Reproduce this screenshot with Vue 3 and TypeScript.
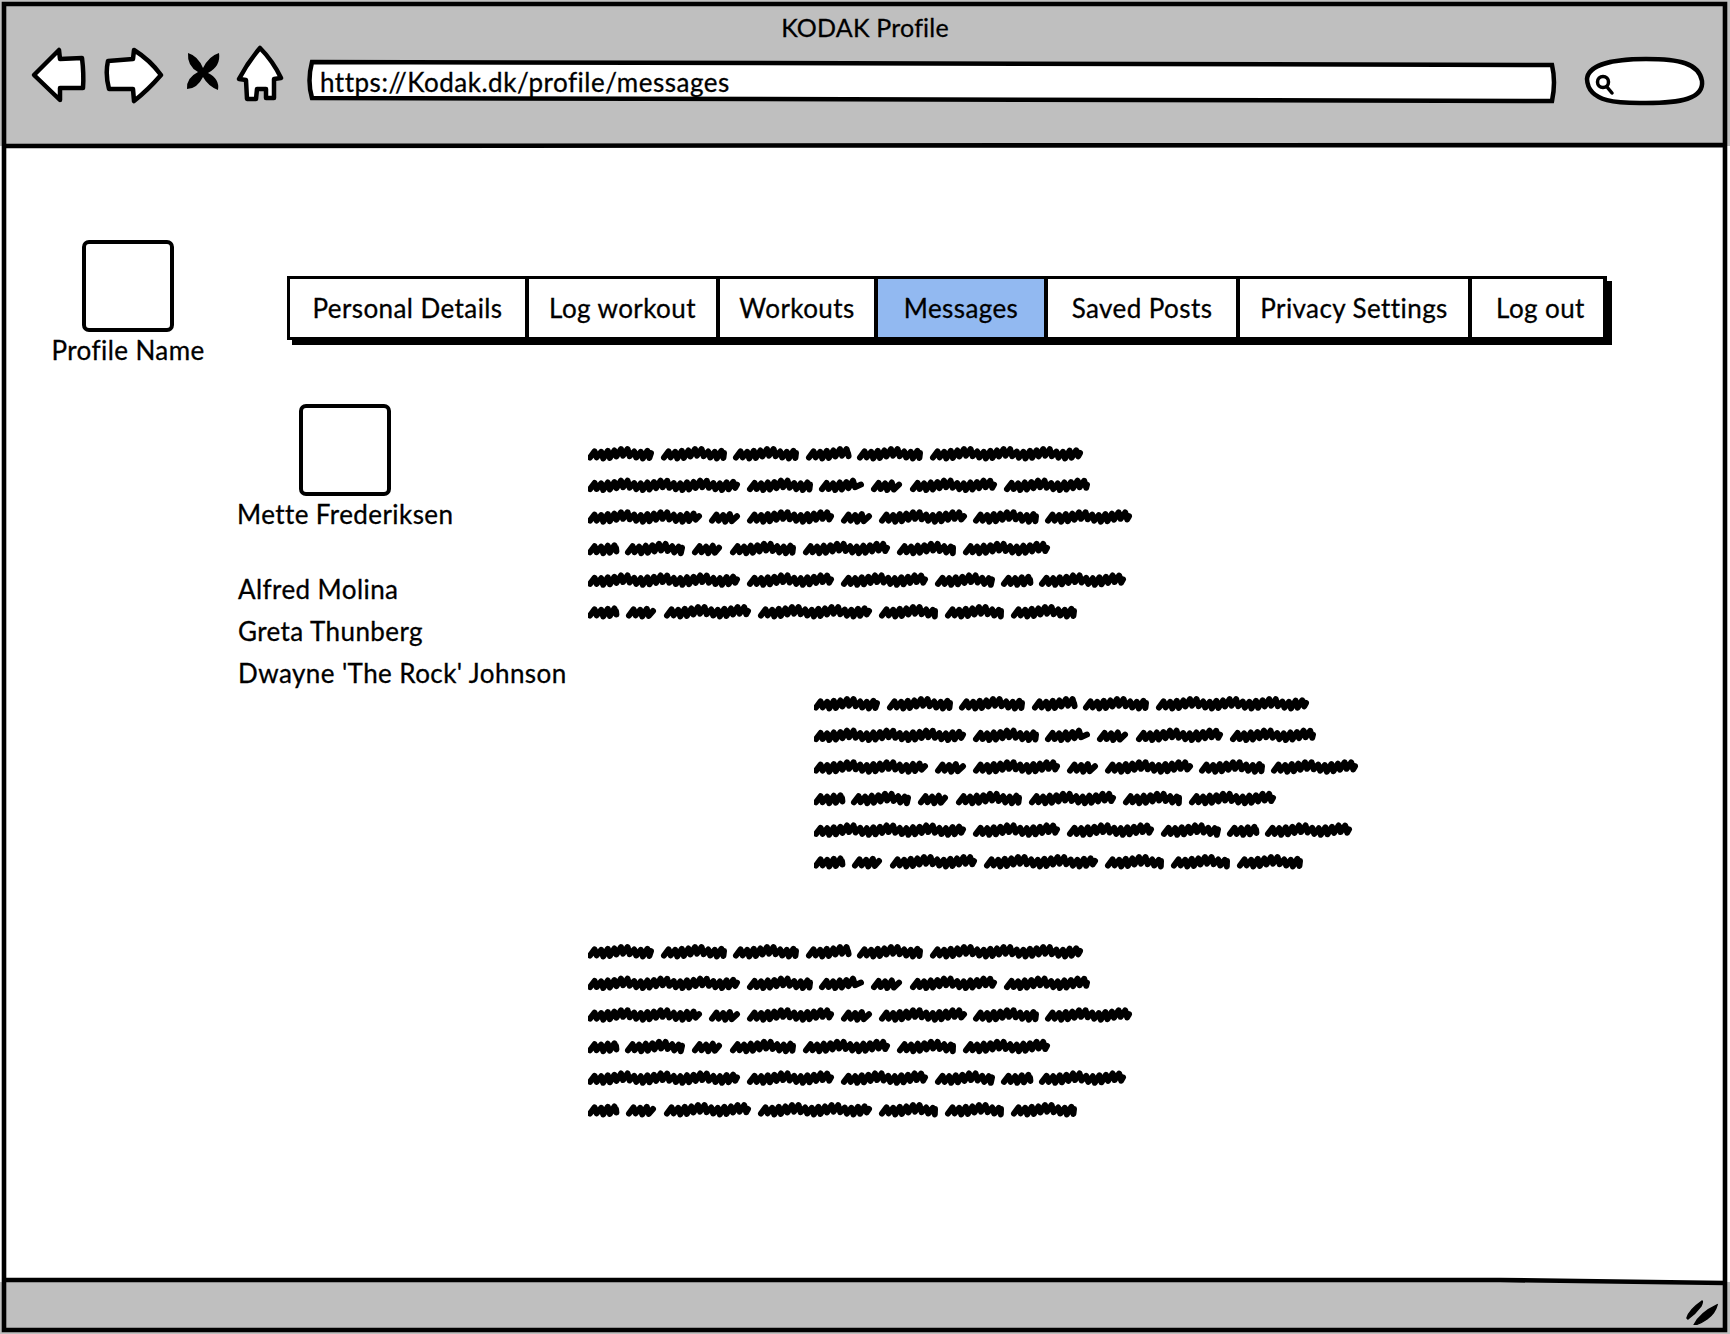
<script setup lang="ts">
const tabs = [
  { label: "Personal Details", active: false },
  { label: "Log workout", active: false },
  { label: "Workouts", active: false },
  { label: "Messages", active: true },
  { label: "Saved Posts", active: false },
  { label: "Privacy Settings", active: false },
  { label: "Log out", active: false },
];

const contacts = ["Alfred Molina", "Greta Thunberg", "Dwayne 'The Rock' Johnson"];

// word extents of the scribbled lines, measured from the left of the block
const LINES = [
  [[0, 65], [74, 138], [146, 210], [219, 262], [270, 334], [343, 494]],
  [[0, 151], [160, 224], [232, 275], [284, 313], [323, 408], [417, 501]],
  [[0, 113], [122, 151], [160, 245], [254, 283], [292, 378], [386, 450], [458, 543]],
  [[0, 30], [38, 96], [105, 133], [143, 207], [216, 301], [310, 367], [376, 461]],
  [[0, 151], [160, 245], [254, 339], [348, 406], [414, 444], [452, 537]],
  [[0, 30], [39, 67], [77, 162], [171, 283], [292, 349], [358, 415], [424, 488]],
];
const LINE_PITCH = 31.6;

// sawtooth squiggle, slanted up to the right, with a slow wobble along the word
function scribble(x0: number, x1: number, y: number): string {
  let x = x0 + 2;
  let d = `M${x} ${y + 3.5}`;
  let i = 0;
  while (x < x1 - 8) {
    const drift = 1.4 * Math.sin((x - x0) * 0.16);
    const up = 3 + ((i * 7) % 3) * 0.5;
    d += ` L${(x + 4.6).toFixed(1)} ${(y - up + drift).toFixed(1)}`;
    d += ` L${(x + 6.6).toFixed(1)} ${(y + 3 + drift).toFixed(1)}`;
    x += 6.6;
    i++;
  }
  return d + ` L${x1 - 2} ${y - 1}`;
}

const scribblePath = LINES.map((line, row) =>
  line.map(([a, b]) => scribble(a, b, 9 + row * LINE_PITCH)).join(" ")
).join(" ");

const blocks = [{ indent: false }, { indent: true }, { indent: false }];
</script>

<template>
  <div class="window">
    <header class="topbar">
      <div class="title">KODAK Profile</div>
      <div class="toolbar">
        <svg class="nav-icons" width="270" height="60" viewBox="0 0 270 60">
          <g fill="#fff" stroke="#000" stroke-width="4.5" stroke-linejoin="round">
            <path d="M4 31 L29 6 L30 15 L52 14 Q54 30 53 44 L30 44 L30 56 Z" />
            <path d="M78 17 L103 15 L104 6 Q120 16 131 31 Q118 46 104 57 L103 45 L79 45 Q75 30 78 17 Z" />
            <path d="M230 4 Q243 17 251 34 L244 35 L244 54 L236 54 L236 45 L227 45 L226 55 L217 55 L216 36 L209 35 Q218 18 230 4 Z" />
          </g>
          <path
            d="M158 9 Q168 12 173 24 Q179 12 189 9 Q191 22 178 29 Q190 35 188 46 Q178 42 173 33 Q167 45 157 45 Q156 34 168 28 Q157 22 158 9 Z"
          />
        </svg>
        <div class="url">
          <svg class="url-frame" width="1253" height="46" viewBox="0 0 1253 46">
            <path
              d="M6 3 L1246 6 Q1250 23 1246 42 L6 39 Q1 22 6 3 Z"
              fill="#fff"
              stroke="#000"
              stroke-width="4.5"
            />
          </svg>
          <span class="url-text">https://Kodak.dk/profile/messages</span>
        </div>
        <svg class="search" width="122" height="52" viewBox="0 0 122 52">
          <path
            d="M3 24 C4 10 28 4 62 4 C95 4 115 8 118 26 C120 44 96 48 62 48 C42 48 4 50 3 24 Z"
            fill="#fff"
            stroke="#000"
            stroke-width="4.5"
          />
          <circle cx="19" cy="27" r="5.5" fill="none" stroke="#000" stroke-width="3.5" />
          <path d="M23 32 L28 38" stroke="#000" stroke-width="3.5" stroke-linecap="round" />
        </svg>
      </div>
    </header>

    <main class="page">
      <div class="top-row">
        <div class="profile">
          <div class="avatar"></div>
          <div class="name">Profile Name</div>
        </div>
        <nav class="tabs">
          <div v-for="tab in tabs" :key="tab.label" class="tab" :class="{ active: tab.active }">
            {{ tab.label }}
          </div>
        </nav>
      </div>

      <div class="content">
        <aside class="people">
          <div class="person">
            <div class="avatar"></div>
            <div class="name">Mette Frederiksen</div>
          </div>
          <ul class="contacts">
            <li v-for="contact in contacts" :key="contact">{{ contact }}</li>
          </ul>
        </aside>
        <section class="thread">
          <svg
            v-for="(block, index) in blocks"
            :key="index"
            class="message"
            :class="{ indent: block.indent }"
            width="560"
            height="180"
            viewBox="0 0 560 180"
          >
            <path
              :d="scribblePath"
              fill="none"
              stroke="#000"
              stroke-width="6"
              stroke-linejoin="round"
              stroke-linecap="round"
            />
          </svg>
        </section>
      </div>
    </main>

    <footer class="statusbar">
      <svg class="grip" width="34" height="26" viewBox="0 0 34 26">
        <path d="M2 19 Q4 11 17 2 Q18 2 16 7 Q10 15 3 20 Z" stroke="#000" stroke-width="1.5" />
        <path d="M9 26 Q15 14 32 6 Q30 14 22 20 Q15 25 9 26 Z" stroke="#000" stroke-width="1.5" />
      </svg>
    </footer>

    <svg class="frame" width="1730" height="1334" viewBox="0 0 1730 1334">
      <path
        d="M4 4 L1725 4 L1725 1330 L4 1330 Z M4 146 L1725 145 M4 1280 L1500 1280 L1725 1283"
        fill="none"
        stroke="#000"
        stroke-width="4.6"
      />
    </svg>
  </div>
</template>

<style scoped>
.window {
  position: relative;
  display: flex;
  flex-direction: column;
  width: 1730px;
  height: 1334px;
  overflow: hidden;
  background: #fff;
  color: #000;
  font-family: Lato, "Open Sans", sans-serif;
  font-size: 26px;
  letter-spacing: 0.42px;
  -webkit-text-stroke: 0.3px #000;
}
.frame {
  position: absolute;
  top: 0;
  left: 0;
  pointer-events: none;
}

/* browser chrome */
.topbar {
  height: 146px;
  background: #bfbfbf;
  flex: none;
}
.title {
  padding-top: 12px;
  line-height: 30px;
  text-align: center;
  font-size: 25px;
  letter-spacing: 0.2px;
}
.toolbar {
  display: flex;
  align-items: flex-start;
  padding-left: 30px;
}
.nav-icons {
  flex: none;
  margin-top: 2px;
}
.url {
  position: relative;
  width: 1253px;
  height: 46px;
  margin-top: 17px;
  margin-left: 6px;
  flex: none;
}
.url-frame {
  position: absolute;
  top: 0;
  left: 0;
}
.url-text {
  position: relative;
  display: block;
  padding-left: 14px;
  line-height: 46px;
  letter-spacing: 0.52px;
}
.search {
  flex: none;
  margin-top: 13px;
  margin-left: 25px;
}

/* page */
.page {
  flex: 1;
}
.top-row {
  display: flex;
  align-items: flex-start;
  padding-top: 94px;
}
.profile {
  display: flex;
  flex-direction: column;
  align-items: center;
  width: 150px;
  margin-left: 53px;
}
.avatar {
  width: 92px;
  height: 92px;
  box-sizing: border-box;
  border: 4px solid #000;
  border-radius: 7px;
}
.name {
  margin-top: 2px;
  line-height: 32px;
  white-space: nowrap;
}
.tabs {
  display: grid;
  grid-template-columns: 239px 191px 158px 170px 192px 232px 137px;
  margin-left: 84px;
  margin-top: 36px;
  border: 3px solid #000;
  border-right-width: 4px;
  box-shadow: 5px 5px 0 #000;
  width: 1313px;
  height: 58px;
}
.tab {
  display: flex;
  align-items: center;
  justify-content: center;
  border-right: 4px solid #000;
  white-space: nowrap;
}
.tab:last-child {
  border-right: none;
}
.tab.active {
  background: #92b9f1;
}

.content {
  display: flex;
  align-items: flex-start;
  margin-left: 237px;
  margin-top: 38px;
}
.people {
  width: 351px;
  flex: none;
}
.person {
  display: inline-flex;
  flex-direction: column;
  align-items: center;
}
.contacts {
  list-style: none;
  margin: 38px 0 0;
  padding: 0 0 0 1px;
}
.contacts li {
  line-height: 42px;
  white-space: nowrap;
}
.thread {
  display: flex;
  flex-direction: column;
  align-items: flex-start;
  gap: 70px;
  padding-top: 41px;
}
.message {
  display: block;
}
.message.indent {
  margin-left: 226px;
  margin-bottom: -2px;
}

.statusbar {
  position: relative;
  height: 52px;
  background: #bfbfbf;
  flex: none;
}
.grip {
  position: absolute;
  right: 11px;
  top: 17px;
}
</style>

<style>
html,
body {
  margin: 0;
  background: #fff;
}
</style>
